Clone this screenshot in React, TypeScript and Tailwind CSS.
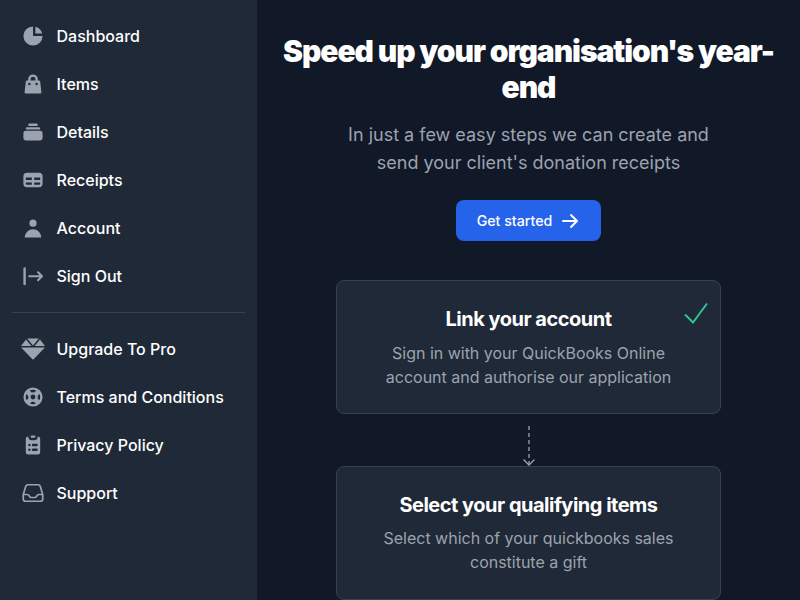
import React from 'react';

type Item = { label: string; icon: React.ReactNode };

const main: Item[] = [
  { label: 'Dashboard', icon: <svg viewBox="0 0 20 20" fill="currentColor"><path d="M2 10a8 8 0 018-8v8h8a8 8 0 11-16 0z" /><path d="M12 2.252A8.014 8.014 0 0117.748 8H12V2.252z" /></svg> },
  { label: 'Items', icon: <svg viewBox="0 0 20 20" fill="currentColor"><path fillRule="evenodd" clipRule="evenodd" d="M10 2a4 4 0 00-4 4v1H5a1 1 0 00-.994.89l-1 9A1 1 0 004 18h12a1 1 0 00.994-1.11l-1-9A1 1 0 0015 7h-1V6a4 4 0 00-4-4zm2 5V6a2 2 0 10-4 0v1h4zm-6 3a1 1 0 112 0 1 1 0 01-2 0zm7-1a1 1 0 100 2 1 1 0 000-2z" /></svg> },
  { label: 'Details', icon: <svg viewBox="0 0 20 20" fill="currentColor"><path d="M7 3a1 1 0 000 2h6a1 1 0 100-2H7zM4 7a1 1 0 011-1h10a1 1 0 110 2H5a1 1 0 01-1-1zM2 11a2 2 0 012-2h12a2 2 0 012 2v4a2 2 0 01-2 2H4a2 2 0 01-2-2v-4z" /></svg> },
  { label: 'Receipts', icon: <svg viewBox="0 0 20 20" fill="currentColor"><path fillRule="evenodd" clipRule="evenodd" d="M5 4a3 3 0 00-3 3v6a3 3 0 003 3h10a3 3 0 003-3V7a3 3 0 00-3-3H5zm-1 9v-1h5v2H5a1 1 0 01-1-1zm7 1h4a1 1 0 001-1v-1h-5v2zm0-4h5V8h-5v2zM9 8H4v2h5V8z" /></svg> },
  { label: 'Account', icon: <svg viewBox="0 0 20 20" fill="currentColor"><path fillRule="evenodd" clipRule="evenodd" d="M10 9a3 3 0 100-6 3 3 0 000 6zm-7 9a7 7 0 1114 0H3z" /></svg> },
  { label: 'Sign Out', icon: <svg viewBox="0 0 24 24" fill="none" stroke="currentColor" strokeWidth="2" strokeLinecap="round" strokeLinejoin="round"><path strokeWidth="2.4" d="M3.6 4.5v15.5" /><path d="M8.2 12.2h12.8M17 8.2l4 4-4 4" /></svg> },
];

const secondary: Item[] = [
  { label: 'Upgrade To Pro', icon: <svg viewBox="0 0 512 512" fill="currentColor"><path d="M378.7 32H133.3L256 182.7 378.7 32zM512 192l-107.4-141.3L289.6 192H512zM107.4 50.7L0 192h222.4L107.4 50.7zM244.3 474.9c3 3.3 7.3 5.1 11.7 5.1s8.7-1.9 11.7-5.1L510.6 224H1.4l242.9 250.9z" /></svg> },
  { label: 'Terms and Conditions', icon: <svg viewBox="0 0 20 20" fill="currentColor"><path fillRule="evenodd" clipRule="evenodd" d="M18 10a8 8 0 11-16 0 8 8 0 0116 0zm-2 0c0 .993-.241 1.929-.668 2.754l-1.524-1.525a3.997 3.997 0 00.078-2.183l1.562-1.562C15.802 8.249 16 9.1 16 10zm-5.165 3.913l1.58 1.58A5.98 5.98 0 0110 16a5.976 5.976 0 01-2.516-.552l1.562-1.562a4.006 4.006 0 001.789.027zm-4.677-2.796a4.002 4.002 0 01-.041-2.08l-.08.08-1.53-1.533A5.98 5.98 0 004 10c0 .954.223 1.856.619 2.657l1.54-1.54zm1.088-6.45A5.974 5.974 0 0110 4c.954 0 1.856.223 2.657.619l-1.54 1.54a4.002 4.002 0 00-2.346.033L7.246 4.668zM12 10a2 2 0 11-4 0 2 2 0 014 0z" /></svg> },
  { label: 'Privacy Policy', icon: <svg viewBox="0 0 20 20" fill="currentColor"><path d="M9 2a1 1 0 000 2h2a1 1 0 100-2H9z" /><path fillRule="evenodd" clipRule="evenodd" d="M4 5a2 2 0 012-2 3 3 0 003 3h2a3 3 0 003-3 2 2 0 012 2v11a2 2 0 01-2 2H6a2 2 0 01-2-2V5zm3 4a1 1 0 000 2h.01a1 1 0 100-2H7zm3 0a1 1 0 000 2h3a1 1 0 100-2h-3zm-3 4a1 1 0 100 2h.01a1 1 0 100-2H7zm3 0a1 1 0 100 2h3a1 1 0 100-2h-3z" /></svg> },
  { label: 'Support', icon: <svg viewBox="0 0 24 24" fill="none" stroke="currentColor" strokeWidth="1.7" strokeLinecap="round" strokeLinejoin="round"><path d="M2.25 13.5h3.86a2.25 2.25 0 012.012 1.244l.256.512a2.25 2.25 0 002.013 1.244h3.218a2.25 2.25 0 002.013-1.244l.256-.512a2.25 2.25 0 012.013-1.244h3.859m-19.5.338V18a2.25 2.25 0 002.25 2.25h15A2.25 2.25 0 0021.75 18v-4.162c0-.224-.034-.447-.1-.661L19.24 5.338a2.25 2.25 0 00-2.15-1.588H6.911a2.25 2.25 0 00-2.15 1.588L2.35 13.177a2.25 2.25 0 00-.1.661z" /></svg> },
];

function Menu({ items }: { items: Item[] }) {
  return (
    <ul>
      {items.map((item) => (
        <li key={item.label} className="flex h-12 items-center pl-[8.5px] text-base font-medium">
          <span className="block size-6 text-[#9ca3af] [&>svg]:size-6">{item.icon}</span>
          <span className="ml-3 whitespace-nowrap">{item.label}</span>
        </li>
      ))}
    </ul>
  );
}

function Card({ title, lines, done }: { title: string; lines: string[]; done?: boolean }) {
  return (
    <section className="relative h-[134px] w-[385px] rounded-lg border border-[#374151] bg-[#1f2937] pt-[22px] text-center">
      <h2 className="text-xl leading-8 font-bold tracking-tight">{title}</h2>
      <p className={`${done ? 'mt-1.5' : 'mt-[5px]'} text-base leading-6 tracking-[-0.01px] text-[#9ca3af]`}>{lines[0]}<br />{lines[1]}</p>
      {done && <svg className="absolute top-[21px] right-[12px] h-6 w-6 text-[#31c48d]" viewBox="0 0 24 24" fill="none" stroke="currentColor" strokeWidth="2"><path d="M1 12.5l8 8L23 1.5" /></svg>}
    </section>
  );
}

export default function App() {
  return (
    <div className="flex h-[600px] w-[800px] overflow-hidden bg-[#111827] font-['Inter',sans-serif] text-white">
      <aside className="w-[257px] shrink-0 bg-[#1f2937] px-3 pt-3">
        <Menu items={main} />
        <div className="mt-3 border-t border-[#374151] pt-3"><Menu items={secondary} /></div>
      </aside>
      <main className="flex flex-1 flex-col items-center pt-[33px]">
        <h1 className="text-center text-[30px] leading-9 font-black tracking-[-1.07px]">Speed up your organisation's year-<br />end</h1>
        <p className="mt-4 text-center text-lg leading-7 text-[#9ca3af]">In just a few easy steps we can create and<br />send your client's donation receipts</p>
        <button className="mt-[23px] flex h-[41px] w-[145px] items-center justify-center rounded-lg bg-[#2563eb] pt-px text-[14.2px] leading-5 font-medium">Get started<svg className="ml-2 size-5" viewBox="0 0 20 20" fill="currentColor"><path fillRule="evenodd" d="M10.293 3.293a1 1 0 011.414 0l6 6a1 1 0 010 1.414l-6 6a1 1 0 01-1.414-1.414L14.586 11H3a1 1 0 110-2h11.586l-4.293-4.293a1 1 0 010-1.414z" /></svg></button>
        <div className="mt-[39px] flex flex-col items-center">
          <Card title="Link your account" lines={['Sign in with your QuickBooks Online', 'account and authorise our application']} done />
          <svg className="mt-3 h-10 w-4 text-[#9ca3af]" viewBox="0 0 16 40" fill="none" stroke="currentColor" strokeWidth="1.3"><path strokeDasharray="4 3" d="M8 0v39" /><path d="M2.5 33.5l5.5 5.5 5.5-5.5" /></svg>
          <Card title="Select your qualifying items" lines={['Select which of your quickbooks sales', 'constitute a gift']} />
        </div>
      </main>
    </div>
  );
}
